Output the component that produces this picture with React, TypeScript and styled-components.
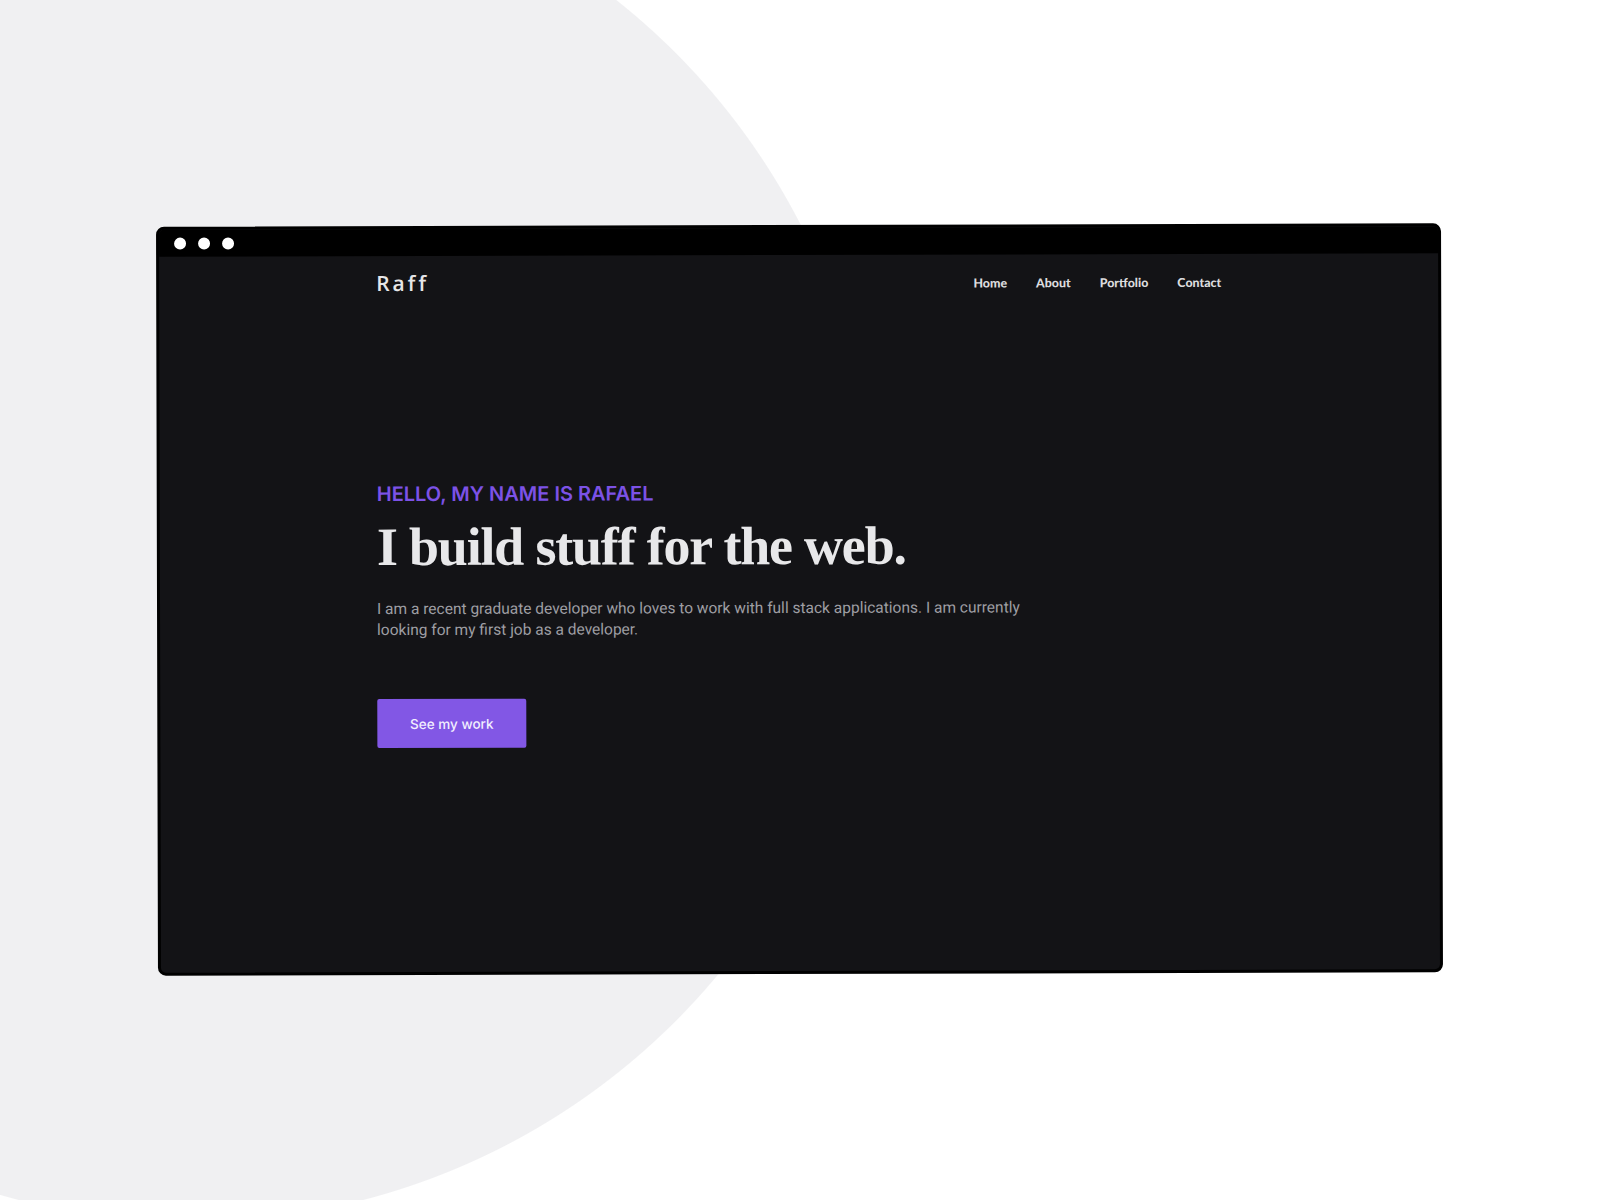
import { FunctionComponent } from "react";
import styled, { createGlobalStyle } from "styled-components";

const GlobalStyle = createGlobalStyle`
  html, body {
    margin: 0;
    padding: 0;
    background: #ffffff;
  }
  * {
    box-sizing: border-box;
  }
`;

const Page = styled.div`
  width: 1600px;
  height: 1200px;
  overflow: hidden;
  padding: 225px 0 0 157px;
  background: radial-gradient(
    circle 685px at 191px 537px,
    #f0f0f2 684.5px,
    #ffffff 685.5px
  );
`;

const BrowserWindow = styled.div`
  width: 1285px;
  height: 749px;
  display: flex;
  flex-direction: column;
  border: 3px solid #000000;
  border-radius: 8px;
  background: #131316;
  overflow: hidden;
  transform: rotate(-0.15deg);
`;

const TitleBar = styled.div`
  height: 27px;
  flex-shrink: 0;
  display: flex;
  flex-direction: row;
  align-items: center;
  gap: 12px;
  padding: 0 0 0 15px;
  background: #000000;
`;

const Dot = styled.span`
  width: 12px;
  height: 12px;
  border-radius: 50%;
  background: #ffffff;
`;

const Container = styled.div`
  width: 845px;
  margin: 0 auto;
  display: flex;
  flex-direction: column;
`;

const Header = styled.header`
  height: 54px;
  display: flex;
  flex-direction: row;
  align-items: center;
  justify-content: space-between;
`;

const Logo = styled.a`
  font-family: "Open Sans", sans-serif;
  font-size: 21px;
  font-weight: 600;
  letter-spacing: 3px;
  color: #e6e6e8;
  text-decoration: none;
`;

const Menu = styled.nav`
  display: flex;
  flex-direction: row;
  align-items: center;
  gap: 29px;
  padding-top: 2px;
`;

const MenuLink = styled.a`
  font-family: "Lato", sans-serif;
  font-size: 12.4px;
  font-weight: 900;
  color: #dcdcde;
  text-decoration: none;
`;

const Hero = styled.section`
  margin-top: 172px;
  display: flex;
  flex-direction: column;
  align-items: flex-start;
`;

const Greeting = styled.p`
  margin: 0;
  font-family: "Inter", sans-serif;
  font-size: 20px;
  line-height: 24px;
  font-weight: 600;
  color: #7c52e6;
`;

const Title = styled.h1`
  margin: 12px 0 0;
  font-family: "Liberation Serif", serif;
  font-size: 54px;
  line-height: 1.1;
  font-weight: 700;
  letter-spacing: -1.2px;
  color: #e8e8ea;
`;

const Intro = styled.p`
  margin: 22px 0 0;
  max-width: 655px;
  font-family: "Roboto", sans-serif;
  font-size: 15.5px;
  line-height: 21px;
  font-weight: 400;
  color: #9e9ea3;
`;

const WorkButton = styled.a`
  margin-top: 58px;
  width: 149px;
  height: 49px;
  display: flex;
  align-items: center;
  justify-content: center;
  border-radius: 2px;
  background: #8257e5;
  font-family: "Inter", sans-serif;
  font-size: 13.5px;
  font-weight: 500;
  color: #f2efff;
  text-decoration: none;
`;

const links = ["Home", "About", "Portfolio", "Contact"];

const App: FunctionComponent = () => {
  return (
    <Page>
      <GlobalStyle />
      <BrowserWindow>
        <TitleBar>
          <Dot />
          <Dot />
          <Dot />
        </TitleBar>
        <Container>
          <Header>
            <Logo>Raff</Logo>
            <Menu>
              {links.map((label) => (
                <MenuLink key={label}>{label}</MenuLink>
              ))}
            </Menu>
          </Header>
          <Hero>
            <Greeting>HELLO, MY NAME IS RAFAEL</Greeting>
            <Title>I build stuff for the web.</Title>
            <Intro>
              I am a recent graduate developer who loves to work with full stack
              applications. I am currently looking for my first job as a
              developer.
            </Intro>
            <WorkButton>See my work</WorkButton>
          </Hero>
        </Container>
      </BrowserWindow>
    </Page>
  );
};

export default App;
